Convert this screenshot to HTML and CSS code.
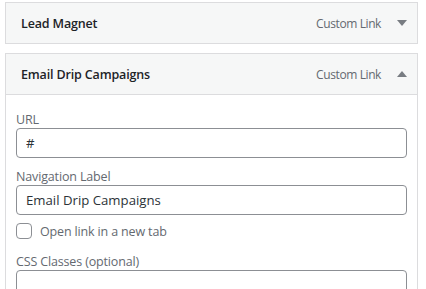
FILE: index.html
```html
<!DOCTYPE html>
<html>
  <head>
    <title>Menu items</title>
    <meta name="viewport" content="width=device-width, initial-scale=1" />
    <link rel="stylesheet" href="styles.css">
  </head>
  <body>
    <ul class="menu-items">
      <li class="menu-item">
        <div class="item-handle">
          <span class="item-title">Lead Magnet</span>
          <span class="item-controls">
            <span class="item-type">Custom Link</span>
            <span class="item-toggle down"></span>
          </span>
        </div>
      </li>
      <li class="menu-item open">
        <div class="item-handle">
          <span class="item-title">Email Drip Campaigns</span>
          <span class="item-controls">
            <span class="item-type">Custom Link</span>
            <span class="item-toggle up"></span>
          </span>
        </div>
        <div class="item-settings">
          <div class="field">
            <label for="url">URL</label>
            <input type="text" id="url" value="#">
          </div>
          <div class="field">
            <label for="nav-label">Navigation Label</label>
            <input type="text" id="nav-label" value="Email Drip Campaigns">
          </div>
          <label class="check-row">
            <span class="checkbox"></span>
            Open link in a new tab
          </label>
          <div class="field field-classes">
            <label for="classes">CSS Classes (optional)</label>
            <input type="text" id="classes" value="">
          </div>
        </div>
      </li>
    </ul>
  </body>
</html>
```

FILE: styles.css
```css
body {
  margin: 0;
  background-color: #ffffff;
  font-family: "Open Sans", Arial, sans-serif;
  color: #1d2327;
  overflow: hidden;
}
.menu-items {
  list-style: none;
  margin: 0;
  padding: 2px 8px 0 5px;
}
.menu-item {
  margin-bottom: 9px;
}
.item-handle {
  display: flex;
  align-items: center;
  justify-content: space-between;
  height: 40px;
  padding: 0 10px 0 15px;
  background-color: #f6f7f7;
  border: 1px solid #dcdcde;
}
.item-title {
  font-size: 12.5px;
  font-weight: 600;
  letter-spacing: -0.15px;
}
.item-controls {
  display: flex;
  align-items: center;
  gap: 16px;
}
.item-type {
  font-size: 12px;
  letter-spacing: -0.4px;
  color: #646970;
}
.item-toggle {
  width: 0;
  height: 0;
  border-left: 5px solid transparent;
  border-right: 5px solid transparent;
}
.item-toggle.down {
  border-top: 6px solid #787c82;
}
.item-toggle.up {
  border-bottom: 6px solid #787c82;
}
.item-settings {
  padding: 16px 10px 20px;
  border: 1px solid #dcdcde;
  border-top: none;
}
.field {
  margin-bottom: 10px;
}
.field label {
  display: block;
  height: 17px;
  line-height: 17px;
  font-size: 12.5px;
  letter-spacing: -0.15px;
  color: #646970;
}
.field input {
  display: block;
  box-sizing: border-box;
  width: 100%;
  height: 30px;
  margin: 0;
  padding: 0 9px;
  font-family: inherit;
  font-size: 13.2px;
  color: #2c3338;
  background-color: #ffffff;
  border: 1px solid #8c8f94;
  border-radius: 4px;
}
.check-row {
  display: flex;
  align-items: center;
  gap: 8px;
  height: 16px;
  margin: -2px 0 14px;
  font-size: 12.5px;
  letter-spacing: -0.15px;
  color: #646970;
}
.checkbox {
  box-sizing: border-box;
  width: 16px;
  height: 16px;
  background-color: #ffffff;
  border: 1px solid #8c8f94;
  border-radius: 4px;
}
```
